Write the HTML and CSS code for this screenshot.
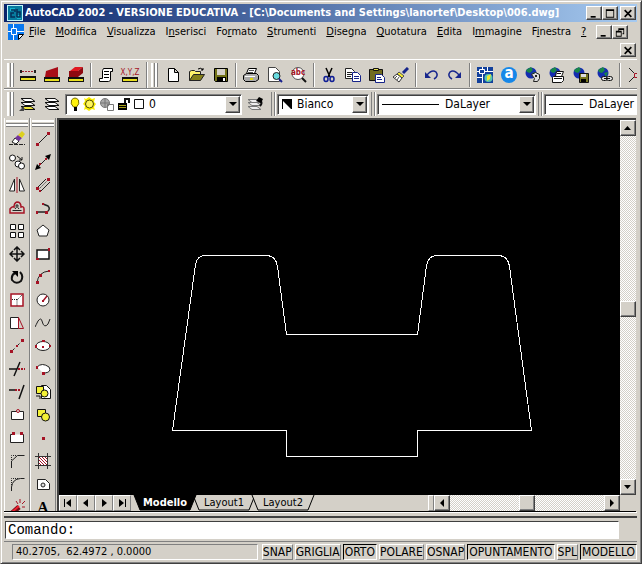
FILE: index.html
```html
<!DOCTYPE html>
<html lang="it">
<head>
<meta charset="utf-8">
<title>AutoCAD 2002</title>
<link rel="stylesheet" href="styles.css">
</head>
<body>
<div class="window">
  <header class="titlebar">
    <svg class="app-icon" viewBox="0 0 16 16"><path fill="#bff4fa" d="M0 0h16v16H0z"/><path fill="#087b9e" d="M1 1h14v14H1z"/><path fill="#15b4cf" d="M3 3h5v3H3zM10 10h4v4h-4z"/><path fill="none" stroke="#042f58" stroke-width="1.500" d="M4 5h4v2M7 8H4v4h4M10 4v8M10 7h3v5h-3"/></svg>
    <h1>AutoCAD 2002 - VERSIONE EDUCATIVA - [C:\Documents and Settings\lanortef\Desktop\006.dwg]</h1>
    <div class="winbuttons">
      <button class="winbtn" aria-label="Riduci a icona"><svg viewBox="0 0 12 10"><path d="M2 8h6v2H2z"/></svg></button><button class="winbtn" aria-label="Ingrandisci"><svg viewBox="0 0 12 10"><path fill-rule="evenodd" d="M1 0h10v10H1zM2 2v7h8V2z"/></svg></button>
      <button class="winbtn close" aria-label="Chiudi"><svg viewBox="0 0 12 10"><path fill="none" stroke="#000" stroke-width="2" d="M2 1l8 8M10 1L2 9"/></svg></button>
    </div>
  </header>

  <nav class="menubar">
    <button class="docicon" aria-label="Documento"><svg viewBox="0 0 16 16"><path fill="#0878f0" d="M0 0h16v10l-5 6H0z"/><path fill="none" stroke="#fff" d="M5.500 0v4M5.500 10v6M0 7.500h3M9 7.500h7M3.500 4.500h5v6h-5z"/><path fill="#fff" stroke="#000" d="M10.500 15.500v-5h5z"/></svg></button>
    <a href="#"><u>F</u>ile</a><a href="#"><u>M</u>odifica</a><a href="#"><u>V</u>isualizza</a><a href="#">I<u>n</u>serisci</a><a href="#">Fo<u>r</u>mato</a><a href="#"><u>S</u>trumenti</a><a href="#"><u>D</u>isegna</a><a href="#"><u>Q</u>uotatura</a><a href="#"><u>E</u>dita</a><a href="#">I<u>m</u>magine</a><a href="#">F<u>i</u>nestra</a><a href="#"><u>?</u></a>
    <div class="docbuttons">
      <button class="winbtn" aria-label="Riduci disegno"><svg viewBox="0 0 12 10"><path d="M2 8h6v2H2z"/></svg></button><button class="winbtn" aria-label="Ripristina disegno"><svg viewBox="0 0 12 10"><path fill-rule="evenodd" d="M4 0h7v7H9V6h1V2H5v1H4zM1 3h7v7H1zM2 5v4h5V5z"/></svg></button>
    </div>
  </nav>
  <div class="menubar-wrap"><button class="winbtn" aria-label="Chiudi disegno"><svg viewBox="0 0 12 10"><path fill="none" stroke="#000" stroke-width="2" d="M2 1l8 8M10 1L2 9"/></svg></button></div>

  <div class="toolrow main-tools">
    <div class="toolbar inquiry">
      <span class="grip"></span>
      <button class="tool" aria-label="Distanza"><svg viewBox="0 0 16 16"><path fill="#111" d="M0 9h16v5H0z"/><path fill="#e8df20" d="M1 11h14v2H1z"/><path stroke="#a02030" stroke-dasharray="2 1" d="M2 4.500h12"/><path fill="#222" d="M0 3h2v3H0zM14 3h2v3h-2z"/></svg></button>
      <button class="tool" aria-label="Area"><svg viewBox="0 0 16 16"><path fill="#a80d18" d="M2 4l12-4v10H1z"/><path fill="#111" d="M0 10h16v5H0z"/><path fill="#e8df20" d="M1 12h14v2H1z"/></svg></button>
      <button class="tool" aria-label="Proprietà di massa"><svg viewBox="0 0 16 16"><path fill="#e01820" d="M2 4l5-4h8l-5 4z"/><path fill="#8f0810" d="M1 4h9l5-4v6l-5 4H1z"/><path fill="#111" d="M0 10h16v5H0z"/><path fill="#e8df20" d="M1 12h14v2H1z"/></svg></button>
      <i class="divider"></i>
      <button class="tool" aria-label="Lista"><svg viewBox="0 0 16 16"><path fill="#fff" stroke="#000" d="M5.500 1.500h9v3h-2v9l-2 1h-9v-3h3v-8z"/><path stroke="#000" d="M6 4.500h5M6 7.500h5M6 10.500h5"/></svg></button>
      <button class="tool xyz" aria-label="Localizza punto"><span>X,Y,Z</span><svg viewBox="0 0 16 5"><path fill="#111" d="M0 0h16v5H0z"/><path fill="#e8df20" d="M1 2h14v2H1z"/></svg></button>
    </div>
    <div class="toolbar standard">
      <span class="grip"></span>
      <button class="tool" aria-label="Nuovo"><svg viewBox="0 0 16 16"><path fill="#fff" stroke="#000" d="M3.500 1.500h6l4 4v9h-10zM9.500 1.500v4h4"/></svg></button>
      <button class="tool" aria-label="Apri"><svg viewBox="0 0 16 16"><path fill="#fff36a" stroke="#222" d="M.500 13.500v-9l2-1h3l1 1h5v3"/><path fill="#85801a" stroke="#222" d="M.500 13.500l4-6h11l-4 6z"/><path fill="none" stroke="#000" d="M9 2q3-2 5 1m0-2v2h-2"/></svg></button>
      <button class="tool" aria-label="Salva"><svg viewBox="0 0 16 16"><path fill="#727218" stroke="#000" d="M1.500 1.500h13v13h-12l-1-1z"/><path fill="#d4d0c8" d="M4 2h8v6H4z"/><path d="M4 10h9v5H4z"/><path fill="#fff" d="M10 11h2v3h-2z"/></svg></button>
      <i class="divider"></i>
      <button class="tool" aria-label="Stampa"><svg viewBox="0 0 16 16"><path fill="#fff" stroke="#000" d="M5.500 1.500h8l-2 5h-8z"/><path stroke="#555" d="M6 3.500h5M5 5.500h5"/><path fill="#aaa" stroke="#000" d="M3.500 6.500h10l2 2v4l-3 2h-10l-2-2v-4z"/><path stroke="#fff" d="M2 9.500h10"/><path stroke="#dfd70b" stroke-width="2" d="M7 12h3"/></svg></button>
      <button class="tool" aria-label="Anteprima"><svg viewBox="0 0 16 16"><path fill="#fff" stroke="#444" d="M1.500.500h7l4 4v10h-11z"/><circle cx="9.500" cy="9" r="3.500" fill="#68dbe0" stroke="#222"/><path stroke="#17208d" stroke-width="2" d="M12 12l3 3"/></svg></button>
      <button class="tool abc" aria-label="Trova"><svg viewBox="0 0 16 16"><circle cx="7" cy="6.500" r="6" fill="#fff" stroke="#555"/><path stroke="#111" stroke-width="2" d="M11 11l4 4"/></svg><span>abc</span></button>
      <i class="divider"></i>
      <button class="tool" aria-label="Taglia"><svg viewBox="0 0 16 16"><path fill="none" stroke="#000" stroke-width="1.500" d="M5 1l4 9M11 1L7 10"/><g fill="none" stroke="#111f96" stroke-width="1.500"><ellipse cx="5" cy="12" rx="2" ry="2.500"/><ellipse cx="11" cy="12" rx="2" ry="2.500"/></g></svg></button>
      <button class="tool" aria-label="Copia"><svg viewBox="0 0 16 16"><path fill="#fff" stroke="#222" d="M.500 1.500h6l3 3v7h-9z"/><path stroke="#222" d="M2 5.500h5M2 7.500h5M2 9.500h4"/><path fill="#fff" stroke="#162489" d="M7.500 5.500h5l3 3v6h-8z"/><path stroke="#162489" d="M9 9.500h5M9 11.500h5"/></svg></button>
      <button class="tool" aria-label="Incolla"><svg viewBox="0 0 16 16"><path fill="#706b20" stroke="#111" d="M.500 2.500h13v11H.500z"/><path fill="#e6df55" stroke="#111" d="M4.500 3.500v-2h5v2z"/><path fill="#fff" stroke="#162489" d="M6.500 7.500h6l3 3v5h-9z"/><path stroke="#162489" d="M8 10.500h4M8 12.500h5"/></svg></button>
      <button class="tool" aria-label="Corrispondenza proprietà"><svg viewBox="0 0 16 16"><path stroke="#162489" stroke-width="3" d="M15 1l-5 5"/><path fill="#f4eb2c" stroke="#555" d="M6 5l5 4-2 2-5-4z"/><path fill="#fff" stroke="#333" d="M4 7l5 4-3 4-6-5z"/><path stroke="#555" d="M2 11l2-2M4 13l2-3"/></svg></button>
      <i class="divider"></i>
      <button class="tool" aria-label="Annulla"><svg viewBox="0 0 16 16"><path fill="none" stroke="#17268d" stroke-width="1.500" d="M4 8q5-6 9-3 3 4-2 7"/><path fill="#17268d" d="M2 5v6h6z"/></svg></button>
      <button class="tool" aria-label="Ripeti"><svg viewBox="0 0 16 16"><path fill="none" stroke="#17268d" stroke-width="1.500" d="M12 8Q7 2 3 5q-3 4 2 7"/><path fill="#17268d" d="M14 5v6H8z"/></svg></button>
      <i class="divider"></i>
      <button class="tool" aria-label="AutoCAD Oggi"><svg viewBox="0 0 16 16"><path fill="#12409c" d="M0 0h16v16H0z"/><path fill="none" stroke="#fff" d="M2.500 2.500h5v4h-5zM5.500 0v2M0 4.500h2M8 4.500h8M5.500 7v9M10.500 0v4M0 10.500h5"/><circle cx="11.500" cy="11" r="4" fill="#57c7b0"/><path fill="#efea34" d="M10 9l4-2-1 5-3 2z"/></svg></button>
      <button class="tool point-a" aria-label="Autodesk Point A"><span>a</span></button>
      <button class="tool" aria-label="Incontra ora"><svg viewBox="0 0 16 16"><circle cx="6" cy="6" r="5.500" fill="#142cb0"/><path fill="#198748" d="M1 3l5-3 2 3-3 3-3-1zM7 6l4-1-2 5z"/><path fill="#ddd" stroke="#222" d="M6.500 7.500l4-2 4 2v4l-2 3h-4l1-3z"/><path stroke="#222" stroke-width="2" d="M10 9h2"/></svg></button>
      <button class="tool" aria-label="Pubblica sul Web"><svg viewBox="0 0 16 16"><circle cx="6" cy="6" r="5.500" fill="#142cb0"/><path fill="#198748" d="M1 3l5-3 2 3-3 3-3-1z"/><path fill="#fff" stroke="#111" d="M7.500 4.500h7l-2 5h-6zM4.500 9.500h10v4l-2 2h-9v-5z"/><path stroke="#111" d="M8 6.500h4M5 11.500h8"/></svg></button>
      <button class="tool" aria-label="eTransmit"><svg viewBox="0 0 16 16"><circle cx="6" cy="6" r="5.500" fill="#142cb0"/><path fill="#198748" d="M1 3l5-3 2 3-3 3-3-1z"/><path fill="#777620" stroke="#111" d="M6.500 6.500h9v9h-9z"/><path fill="#ddd" d="M8 7h5v3H8z"/><path d="M8 12h5v3H8z"/></svg></button>
      <button class="tool" aria-label="Collegamento ipertestuale"><svg viewBox="0 0 16 16"><circle cx="6" cy="6" r="5.500" fill="#142cb0"/><path fill="#198748" d="M1 3l5-3 2 3-3 3-3-1zM7 6l4-1-2 5z"/><g fill="#ddd" stroke="#111"><rect x="4.500" y="9.500" width="6" height="4" rx="2"/><rect x="9.500" y="9.500" width="6" height="4" rx="2"/></g><path stroke="#111" d="M7 11.500h6"/></svg></button>
      <i class="divider"></i>
      <button class="tool" aria-label="Punto di tracciamento temporaneo"><svg viewBox="0 0 16 16"><path fill="none" stroke="#222" d="M2 1l5 5M2 15l5-5"/><path fill="none" stroke="#a51325" d="M7.500 6.500h4v4h-4z"/><path stroke="#222" d="M12 8.500h4"/></svg></button>
    </div>
  </div>

  <div class="toolrow props">
    <span class="grip"></span>
    <button class="tool" aria-label="Rendi corrente il layer"><svg viewBox="0 0 18 16"><g fill="#fff" stroke="#111"><path fill="#ede33b" d="M2 10.500h10l4 3H6z"/><path d="M2 6.500h10l4 3H6z"/><path d="M2 2.500h10l4 3H6z"/></g><path fill="#444" d="M0 15l5-5v5z"/></svg></button>
    <button class="tool" aria-label="Layer"><svg viewBox="0 0 18 16"><g fill="#fff" stroke="#111"><path d="M2 10.500h10l4 3H6z"/><path d="M2 6.500h10l4 3H6z"/><path d="M2 2.500h10l4 3H6z"/></g></svg></button>
    <div class="combo layer">
      <svg viewBox="0 0 80 16"><path fill="#fff20c" stroke="#776b00" d="M6.500 11Q3 8 4.500 4q3.500-4 7 0 1.500 4-2 7z"/><path d="M7 11h3v4H7z"/><path fill="#f9ed00" d="M17 2l2 1 3-2 3 2 3-1-1 4 2 2-2 3 1 3-3-1-3 2-3-2-2 1 1-4-2-2 2-3z"/><circle cx="22.500" cy="8" r="4" fill="#fff65b" stroke="#4f4900"/><circle cx="38" cy="7" r="4.500" fill="#aaa" stroke="#777"/><path fill="none" stroke="#777" d="M34 7h8M38 3v8M40.500 8.500h6v6h-6z"/><path d="M51 7h9v7h-9z"/><path stroke="#a9a31d" d="M52 9.500h7M52 11.500h7"/><path fill="none" stroke="#111" stroke-width="2" d="M58 7V3h4v4"/><path fill="#fff" stroke="#111" d="M67.500 3.500h9v9h-9z"/></svg>
      <select aria-label="Layer"><option>0</option></select><span class="arrow"></span>
    </div>
    <button class="tool previous" aria-label="Layer precedente"><svg viewBox="0 0 18 16"><g fill="#eee" stroke="#777"><path d="M1 10.500h9l4 3H5z"/><path d="M1 6.500h9l4 3H5z"/><path d="M1 3.500h9l4 3H5z"/></g><path fill="none" stroke="#111" stroke-width="2" d="M13 10q3-3 0-6"/><path d="M9 5l3-4 4 2-2 4z"/></svg></button>
    <i class="divider"></i>
    <div class="combo color"><svg viewBox="0 0 16 16"><path d="M3 3h10v10H3z"/><path fill="#fff" d="M4 5l8 8H4z"/></svg><select aria-label="Colore"><option>Bianco</option></select><span class="arrow"></span></div>
    <i class="divider"></i>
    <div class="combo linetype"><i class="sample"></i><select aria-label="Tipo di linea"><option>DaLayer</option></select><span class="arrow"></span></div>
    <i class="divider"></i>
    <div class="combo weight"><i class="sample"></i><select aria-label="Spessore di linea"><option>DaLayer</option></select></div>
  </div>

  <main class="workspace">
    <aside class="palette">
      <span class="hgrip"></span>
      <button class="tool" aria-label="Cancella"><svg viewBox="0 0 16 16"><path stroke="#222" stroke-dasharray="4 1" d="M0 13.500h16"/><path fill="#fff" stroke="#222" d="M3 11l3-4 4 3-3 3z"/><path fill="#73349c" d="M6 7l3-3 4 3-3 3z"/><path fill="#ddd11e" d="M9 4l4-4 3 3-3 4z"/></svg></button>
      <button class="tool" aria-label="Copia oggetto"><svg viewBox="0 0 16 16"><g fill="#fff" stroke="#111"><circle cx="3.500" cy="4" r="3"/><circle cx="9" cy="10" r="3"/><circle cx="12.500" cy="12" r="3"/></g><path fill="none" stroke="#111" d="M8 2l5 4m0-3v3h-3"/></svg></button>
      <button class="tool" aria-label="Specchio"><svg viewBox="0 0 16 16"><path fill="#fff" stroke="#222" d="M5.500 2v12h-5zM10.500 2v12h5z"/><path stroke="#a51325" d="M8 0v16"/></svg></button>
      <button class="tool" aria-label="Offset"><svg viewBox="0 0 16 16"><path fill="none" stroke="#a51325" stroke-width="1.500" d="M1 13V9q2-3 4-2 0-4 3-5 4 0 4 5 3-1 3 2v4z"/><path fill="none" stroke="#222" d="M3.500 10.500h9M6 9q2-1 1-4h2q-1 3 1 4"/></svg></button>
      <button class="tool" aria-label="Serie"><svg viewBox="0 0 16 16"><path fill="#fff" stroke="#111" d="M1.500 1.500h5v5h-5zM9.500 1.500h5v5h-5zM1.500 9.500h5v5h-5zM9.500 9.500h5v5h-5z"/></svg></button>
      <button class="tool" aria-label="Sposta"><svg viewBox="0 0 16 16"><path fill="none" stroke="#111" stroke-width="1.500" d="M8 1v14M1 8h14M5 4l3-3 3 3M5 12l3 3 3-3M4 5L1 8l3 3M12 5l3 3-3 3"/></svg></button>
      <button class="tool" aria-label="Ruota"><svg viewBox="0 0 16 16"><path fill="none" stroke="#111" stroke-width="2" d="M11 3q4 4 1 9-5 4-9-1-1-5 3-7"/><path d="M3 2h6v6z"/></svg></button>
      <button class="tool" aria-label="Scala"><svg viewBox="0 0 16 16"><path fill="#fff" stroke="#a51325" stroke-width="1.500" d="M2 2h12v12H2z"/><path fill="none" stroke="#222" stroke-dasharray="1 1" d="M3 7.500h5v6M8 8l5-5"/></svg></button>
      <button class="tool" aria-label="Stira"><svg viewBox="0 0 16 16"><path fill="#fff" stroke="#222" d="M1.500 2.500h8v11h-8z"/><path fill="none" stroke="#a51325" d="M9.500 2.500l5 11h-5z"/></svg></button>
      <button class="tool" aria-label="Allunga"><svg viewBox="0 0 16 16"><path stroke="#222" stroke-dasharray="5 2" d="M2 14L14 2"/><path fill="#a51325" d="M1 12h3v3H1zM12 1h3v3h-3zM7 7h2v2H7z"/></svg></button>
      <button class="tool" aria-label="Taglia oggetto"><svg viewBox="0 0 16 16"><path stroke="#111" stroke-width="1.500" d="M5 15L11 1M0 8h8"/><path stroke="#a51325" stroke-width="2" stroke-dasharray="2 1" d="M9 8h7"/></svg></button>
      <button class="tool" aria-label="Estendi"><svg viewBox="0 0 16 16"><path stroke="#111" stroke-width="1.500" d="M10 15l5-14M0 6h6"/><path stroke="#a51325" stroke-width="2" stroke-dasharray="2 1" d="M6 6h6"/></svg></button>
      <button class="tool" aria-label="Spezza in un punto"><svg viewBox="0 0 16 16"><path fill="#fff" stroke="#222" d="M2.500 4.500h12v8h-12z"/><circle cx="9" cy="4" r="1.500" fill="#ddd" stroke="#a51325"/></svg></button>
      <button class="tool" aria-label="Spezza"><svg viewBox="0 0 16 16"><path fill="#fff" stroke="#222" d="M5 4.500H1.500v8h13v-8H12"/><path fill="#a51325" d="M3 2h3v3H3zM11 2h3v3h-3z"/></svg></button>
      <button class="tool" aria-label="Cima"><svg viewBox="0 0 16 16"><path fill="none" stroke="#222" d="M2.500 15V8l6-5.500h7"/><path fill="none" stroke="#222" stroke-dasharray="1 1" d="M2.500 7V2.500h5"/></svg></button>
      <button class="tool" aria-label="Raccorda"><svg viewBox="0 0 16 16"><path fill="none" stroke="#222" d="M2.500 15V11q1-8 9-8.500h4"/><path fill="none" stroke="#222" stroke-dasharray="1 1" d="M2.500 9V2.500h7"/></svg></button>
      <button class="tool" aria-label="Esplodi"><svg viewBox="0 0 16 16"><path stroke="#701018" stroke-width="5" d="M2 15l8-7"/><path stroke="#ef2030" stroke-width="2" d="M2 14l8-7"/><path fill="none" stroke="#a51325" d="M9 5L7 2M11 4V0M13 5l3-3M13 8h3"/></svg></button>
    </aside>
    <aside class="palette draw">
      <span class="hgrip"></span>
      <button class="tool" aria-label="Linea"><svg viewBox="0 0 16 16"><path stroke="#222" d="M3 13L13 3"/><path fill="#a51325" d="M1 12h3v3H1zM12 1h3v3h-3z"/></svg></button>
      <button class="tool" aria-label="Linea di costruzione"><svg viewBox="0 0 16 16"><path stroke="#222" d="M2 14L14 2"/><path d="M16 0l-2 6-4-4zM0 16l2-6 4 4z"/><path fill="#a51325" d="M10 4h2v2h-2zM4 9h2v2H4z"/></svg></button>
      <button class="tool" aria-label="Linea multipla"><svg viewBox="0 0 16 16"><path fill="none" stroke="#222" d="M1 12L11 2M5 15L15 5"/><path stroke="#555" stroke-dasharray="2 1" d="M3 13L13 3"/><path fill="#a51325" d="M1 10h3v3H1zM12 1h3v3h-3zM4 13h2v2H4z"/></svg></button>
      <button class="tool" aria-label="Polilinea"><svg viewBox="0 0 16 16"><path fill="none" stroke="#222" stroke-width="1.500" d="M2 12h10q4-3 1-6L8 4"/><path fill="#a51325" d="M1 11h2v3H1zM10 11h3v3h-3zM7 3h2v2H7z"/></svg></button>
      <button class="tool" aria-label="Poligono"><svg viewBox="0 0 16 16"><path fill="#fff" stroke="#222" d="M8 2l6 5-2 6H4L2 7z"/></svg></button>
      <button class="tool" aria-label="Rettangolo"><svg viewBox="0 0 16 16"><path fill="#fff" stroke="#111" stroke-width="1.500" d="M2 4h12v9H2z"/><path fill="#a51325" d="M1 12h3v2H1zM13 2h2v3h-2z"/></svg></button>
      <button class="tool" aria-label="Arco"><svg viewBox="0 0 16 16"><path fill="none" stroke="#222" d="M2 14q1-11 12-12"/><path fill="#a51325" d="M1 12h3v3H1zM4 5h3v3H4zM13 1h2v2h-2z"/></svg></button>
      <button class="tool" aria-label="Cerchio"><svg viewBox="0 0 16 16"><circle cx="8" cy="8" r="6" fill="#fff" stroke="#222"/><path stroke="#a51325" stroke-width="1.500" d="M8 9l4-5"/><path fill="#a51325" d="M7 8h2v2H7z"/></svg></button>
      <button class="tool" aria-label="Spline"><svg viewBox="0 0 16 16"><path fill="none" stroke="#222" d="M0 12q1-2 3-6 3-4 4 0 2 8 6 3l2-5"/></svg></button>
      <button class="tool" aria-label="Ellisse"><svg viewBox="0 0 16 16"><ellipse cx="8" cy="8" rx="7" ry="4.500" fill="#fff" stroke="#222"/><path fill="#a51325" d="M0 7h2v3H0zM7 2h3v2H7zM14 7h2v2h-2zM7 8h2v2H7z"/></svg></button>
      <button class="tool" aria-label="Arco ellittico"><svg viewBox="0 0 16 16"><path fill="#fff" stroke="#222" d="M2 6q5-5 12 0 3 5-4 6H8"/><path fill="#a51325" d="M1 5h2v3H1zM7 11h3v3H7z"/></svg></button>
      <button class="tool" aria-label="Inserisci blocco"><svg viewBox="0 0 16 16"><path fill="#fff" stroke="#111" d="M6.500 1.500h5l4 4v9h-9z"/><path fill="#f4f235" stroke="#111" d="M1.500 2.500h7v7h-7z"/><circle cx="9.500" cy="9.500" r="3.500" fill="#f4f235" stroke="#111"/><path fill="none" stroke="#111" d="M1 12h4v3"/></svg></button>
      <button class="tool" aria-label="Crea blocco"><svg viewBox="0 0 16 16"><path fill="#f4f235" stroke="#111" d="M2.500 2.500h8v7h-8z"/><circle cx="10.500" cy="10" r="4" fill="#f4f235" stroke="#111"/></svg></button>
      <button class="tool" aria-label="Punto"><svg viewBox="0 0 16 16"><path fill="#a51325" d="M7 7h3v3H7z"/></svg></button>
      <button class="tool" aria-label="Tratteggio"><svg viewBox="0 0 16 16"><path fill="#fff" d="M3 3h10v10H3z"/><path stroke="#a51325" d="M3 9l4 4M3 6l7 7M3 3l10 10M6 3l7 7M9 3l4 4"/><path fill="none" stroke="#333" d="M3.500 0v16M12.500 0v16M0 3.500h16M0 12.500h16"/></svg></button>
      <button class="tool" aria-label="Regione"><svg viewBox="0 0 16 16"><path fill="#fff" stroke="#222" d="M2.500 3.500h8l4 4v6h-12z"/><circle cx="8" cy="9" r="2" fill="#ddd" stroke="#222"/></svg></button>
      <button class="tool letter" aria-label="Testo"><span>A</span></button>
    </aside>

    <section class="drawing">
      <div class="viewport">
        <svg class="canvas" viewBox="59 120 561 375"><path fill="none" stroke="#fff" d="M172.500 430.500L195.500 264.500Q197.500 255.500 204.500 255.500H266.500Q275.500 255.500 277.500 266.500L286.500 334.500H417.500L426.500 265.500Q428.500 255.500 436.500 255.500H498.500Q507.500 255.500 509.500 266.500L531.500 430.500H417.500V456.500H286.500V430.500Z"/></svg>
        <div class="scroll vertical"><button class="sbtn" aria-label="Su"><svg viewBox="0 0 8 8"><path d="M0 6h7L3.500 2z"/></svg></button><i class="track"></i><i class="thumb"></i><i class="track end"></i><button class="sbtn" aria-label="Giù"><svg viewBox="0 0 8 8"><path d="M0 2h7L3.500 6z"/></svg></button></div>
      </div>
      <div class="layoutbar">
        <div class="tabnav"><button aria-label="Prima scheda"><svg viewBox="0 0 8 8"><path d="M0 0h1v8H0zM7 0v8L2 4z"/></svg></button><button aria-label="Scheda precedente"><svg viewBox="0 0 8 8"><path d="M6 0v8L1 4z"/></svg></button><button aria-label="Scheda successiva"><svg viewBox="0 0 8 8"><path d="M2 0v8l5-4z"/></svg></button><button aria-label="Ultima scheda"><svg viewBox="0 0 8 8"><path d="M1 0v8l5-4zM7 0h1v8H7z"/></svg></button></div>
        <div class="tabs">
          <button class="tab active"><svg viewBox="0 0 64 16" preserveAspectRatio="none"><path fill="#000" stroke="#000" d="M1 0l6 15h50l6-15z"/></svg><span>Modello</span></button>
          <button class="tab"><svg viewBox="0 0 64 16" preserveAspectRatio="none"><path fill="#d4d0c8" stroke="#000" d="M1 0l6 15h50l6-15"/></svg><span>Layout1</span></button>
          <button class="tab"><svg viewBox="0 0 64 16" preserveAspectRatio="none"><path fill="#d4d0c8" stroke="#000" d="M1 0l6 15h50l6-15"/></svg><span>Layout2</span></button>
        </div>
        <i class="splitter"></i>
        <div class="scroll horizontal"><button class="sbtn" aria-label="Sinistra"><svg viewBox="0 0 8 8"><path d="M6 0v8L2 4z"/></svg></button><i class="track"></i><i class="thumb"></i><i class="track end"></i><button class="sbtn" aria-label="Destra"><svg viewBox="0 0 8 8"><path d="M2 0v8l4-4z"/></svg></button></div>
      </div>
    </section>
  </main>

  <div class="command"><input type="text" aria-label="Riga di comando" value="Comando:"></div>

  <footer class="statusbar">
    <output>40.2705,&nbsp; 62.4972 , 0.0000</output>
    <button>SNAP</button><button>GRIGLIA</button><button class="on">ORTO</button><button>POLARE</button><button>OSNAP</button><button class="on">OPUNTAMENTO</button><button>SPL</button><button class="on">MODELLO</button>
  </footer>
</div>
</body>
</html>
```
FILE: styles.css
```css
* { box-sizing: border-box; }

body {
  margin: 0;
  background: #d4d0c8;
  color: #000;
  font: 11px/14px "DejaVu Sans Condensed", "Noto Sans", sans-serif;
}

button, input, select { font: inherit; color: inherit; margin: 0; padding: 0; border-radius: 0; }
button { border: 0; background: none; }
a { color: inherit; text-decoration: none; }
svg { display: block; flex: none; }
i { flex: none; }

.window {
  display: flex;
  flex-direction: column;
  height: 100vh;
  padding: 3px 4px 2px 3px;
  overflow: hidden;
  border: 1px solid #d4d0c8;
  border-right: 1px solid #404040;
  border-bottom: 1px solid #404040;
  box-shadow: inset 1px 1px #fff, inset -1px -1px #808080;
}
.window > * { flex: none; }

/* title and menus */
.titlebar {
  display: flex;
  align-items: center;
  height: 18px;
  padding: 0 1px 0 3px;
  background: linear-gradient(90deg, #0a246a, #a6caf0);
  color: #fff;
}
.app-icon { width: 16px; height: 16px; }
h1 {
  flex: 1;
  min-width: 0;
  margin: 0 0 0 2px;
  overflow: hidden;
  font-size: 11px;
  font-weight: bold;
  white-space: nowrap;
}
.winbuttons, .docbuttons { display: flex; }
.winbtn {
  display: grid;
  place-items: center;
  width: 16px;
  height: 14px;
  background: #d4d0c8;
  border: 1px solid;
  border-color: #fff #404040 #404040 #fff;
  box-shadow: inset -1px -1px #808080;
}
.winbtn svg { width: 10px; height: 9px; }
.winbtn.close { margin-left: 2px; }
.menubar { display: flex; align-items: center; height: 20px; padding-left: 4px; }
.menubar a { padding: 0 5px; white-space: nowrap; }
.docicon svg { width: 16px; height: 16px; }
.docbuttons { margin-left: auto; padding-right: 9px; }
.menubar-wrap { display: flex; justify-content: flex-end; height: 17px; padding: 1px 1px 0 0; }

/* toolbars */
.toolrow {
  display: flex;
  align-items: center;
  height: 30px;
  border-top: 1px solid #fff;
  border-bottom: 1px solid #808080;
  overflow: hidden;
}
.main-tools { padding-top: 2px; }
.toolbar { display: flex; align-items: center; height: 26px; flex: none; border-right: 1px solid #808080; }
.toolbar.standard { border-left: 1px solid #fff; }
.grip {
  flex: none;
  width: 6px;
  height: 24px;
  margin: 0 3px;
  border: solid #fff;
  border-width: 0 2px;
  box-shadow: 1px 0 #808080, inset -1px 0 #808080;
}
.tool { display: grid; place-items: center; flex: none; width: 24px; height: 23px; position: relative; }
.tool svg { width: 16px; height: 16px; }
.toolbar .divider { width: 2px; height: 24px; margin: 0 2px; border-left: 1px solid #808080; border-right: 1px solid #fff; }
.xyz { align-content: center; color: #a51325; font-size: 8px; line-height: 9px; }
.xyz svg { height: 5px; }
.abc span { position: absolute; left: 4px; top: 4px; color: #a51325; font-size: 8px; line-height: 10px; font-weight: bold; }
.point-a span { width: 16px; height: 16px; border-radius: 50%; background: #1687e8; color: #fff; font-size: 15px; line-height: 13px; font-weight: bold; text-align: center; }
.inquiry { width: 143px; }
.standard .grip { margin-right: 4px; }

.props { height: 29px; border-bottom: 0; }
.props .tool svg { width: 18px; }
.props .divider { width: 4px; height: 24px; margin: 0 2px; border: solid #808080; border-width: 0 1px; box-shadow: 1px 0 #fff; }
.combo {
  display: flex;
  align-items: center;
  flex: none;
  height: 21px;
  padding: 1px;
  background: #fff;
  border: 1px solid;
  border-color: #808080 #fff #fff #808080;
  box-shadow: inset 1px 1px #404040;
}
.combo svg { height: 16px; }
.combo select { flex: 1; min-width: 0; height: 17px; padding-left: 2px; border: 0; background: none; appearance: none; font-size: 12px; }
.arrow {
  display: grid;
  place-items: center;
  width: 15px;
  height: 17px;
  background: #d4d0c8;
  border: 1px solid;
  border-color: #fff #404040 #404040 #fff;
  box-shadow: inset -1px -1px #808080;
}
.arrow::after { content: ""; border: solid transparent; border-width: 4px 4px 0; border-top-color: #000; }
.layer { width: 177px; margin-left: 1px; }
.layer svg { width: 80px; }
.previous { margin: 0 1px 0 2px; }
.color { width: 92px; }
.color svg { width: 16px; }
.linetype { width: 159px; }
.weight { flex: 1; border-right: 0; }
.sample { width: 57px; height: 1px; margin: 0 4px 0 3px; background: #000; }
.weight .sample { width: 34px; }

/* palettes and drawing */
.window > .workspace {
  display: flex;
  flex: 1;
  min-height: 0;
  margin-right: 1px;
  overflow: hidden;
  border-bottom: 1px solid #000;
}
.palette {
  display: flex;
  flex-direction: column;
  align-items: center;
  flex: none;
  width: 26px;
  border-left: 1px solid #fff;
  border-right: 1px solid #808080;
  overflow: hidden;
}
.hgrip { flex: none; width: 22px; height: 6px; margin: 2px 0 1px; border: solid #fff; border-width: 2px 0; box-shadow: 0 1px #808080, inset 0 -1px #808080; }
.letter span { font: bold 15px/12px "Liberation Serif", serif; }
.drawing {
  display: flex;
  flex-direction: column;
  flex: 1;
  min-width: 0;
  margin-left: 1px;
  border-left: 2px solid #404040;
  border-top: 2px solid #404040;
}
.viewport { display: flex; flex: 1; min-height: 0; background: #000; }
.canvas { flex: 1 1 0; min-width: 0; height: 100%; shape-rendering: crispEdges; }
.scroll { display: flex; flex: none; background: repeating-conic-gradient(#fff 0 25%, #d4d0c8 0 50%) 0 0 / 2px 2px; }
.vertical { flex-direction: column; width: 16px; }
.sbtn, .thumb {
  display: grid;
  place-items: center;
  flex: none;
  width: 16px;
  height: 16px;
  background: #d4d0c8;
  border: 1px solid;
  border-color: #fff #404040 #404040 #fff;
  box-shadow: inset -1px -1px #808080;
}
.sbtn svg { width: 8px; height: 8px; }
.track { flex: 1; }
.layoutbar { display: flex; flex: none; height: 16px; }
.tabnav { display: flex; flex: none; }
.tabnav button {
  display: grid;
  place-items: center;
  width: 18px;
  height: 16px;
  border: 1px solid;
  border-color: #fff #808080 #808080 #fff;
}
.tabnav svg { width: 8px; height: 8px; }
.tabs { display: flex; flex: 1; padding-left: 2px; }
.tab { position: relative; width: 64px; height: 16px; margin-right: -5px; }
.tab svg { position: absolute; inset: 0; width: 100%; height: 100%; }
.tab span { position: relative; }
.active { z-index: 1; color: #fff; font-weight: bold; }
.splitter { width: 6px; height: 16px; border: 1px solid; border-color: #fff #808080 #808080 #fff; }
.horizontal { width: 186px; height: 16px; margin-right: 16px; }
.vertical .track { flex-grow: 165; }
.vertical .track.end { flex-grow: 162; }

/* command line and status */
.command { height: 29px; padding: 8px 18px 3px 1px; border-top: 1px solid #fff; background: linear-gradient(#d4d0c8 3px, #404040 3px 5px, #d4d0c8 5px); }
.command input {
  display: block;
  width: 100%;
  height: 18px;
  padding-left: 2px;
  background: #fff;
  border: 1px solid;
  border-color: #404040 #fff #fff #404040;
  font: 14px/16px "Liberation Mono", monospace;
}
.statusbar { display: flex; gap: 2px; height: 20px; padding-top: 2px; border-top: 1px solid #808080; overflow: hidden; }
.statusbar output, .statusbar button {
  height: 16px;
  border: 1px solid;
  border-color: #fff #808080 #808080 #fff;
  white-space: nowrap;
}
.statusbar button { flex: none; font-size: 12px; }
.statusbar output { flex: 1; min-width: 0; margin: 0 2px 0 8px; border-color: #808080 #fff #fff #808080; padding-left: 3px; }
.statusbar .on { padding: 0 1px; border-color: #000 #fff #fff #000; }
```
